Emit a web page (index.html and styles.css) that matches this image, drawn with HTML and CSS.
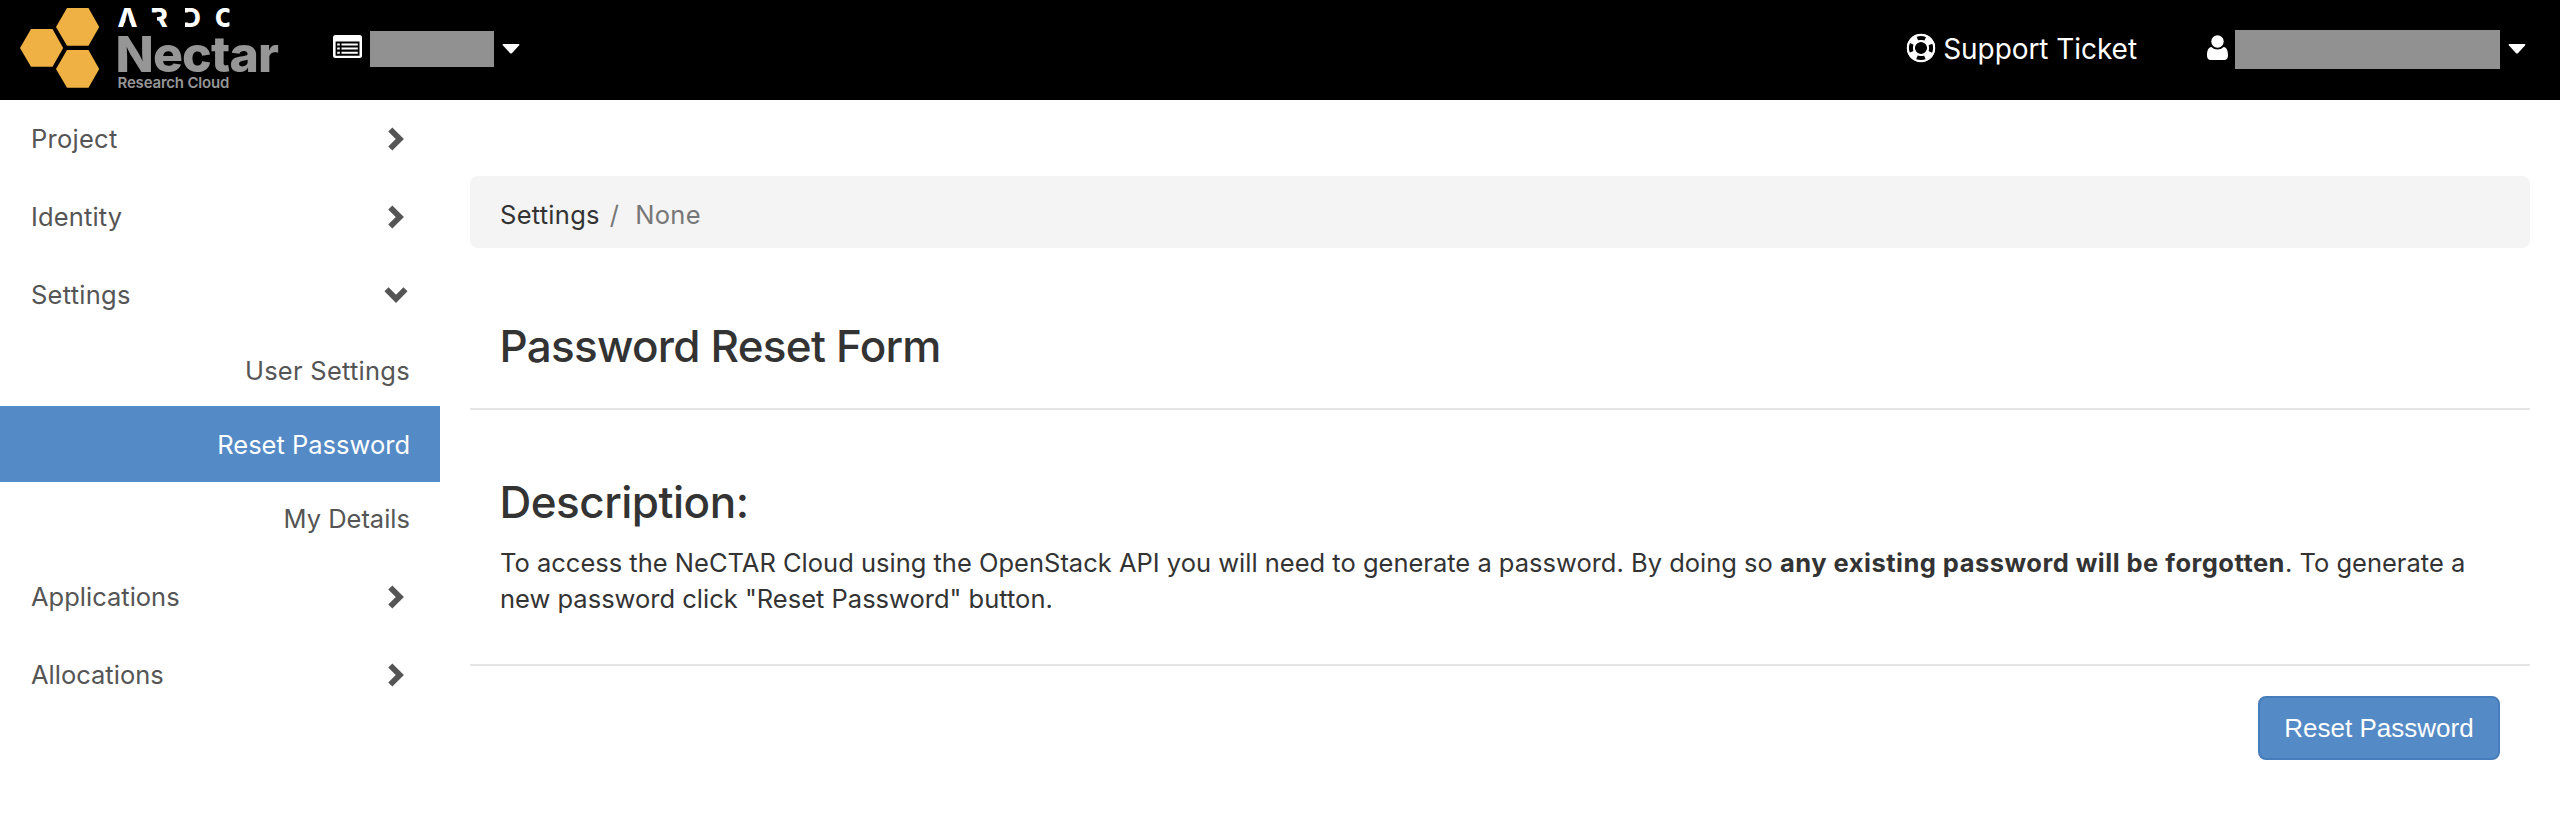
FILE: index.html
```html
<!DOCTYPE html>
<html lang="en">
<head>
<meta charset="utf-8">
<title>Password Reset Form</title>
<link rel="stylesheet" href="styles.css">
</head>
<body>
<svg class="defs" aria-hidden="true">
  <symbol id="chevron" viewBox="0 0 24 24"><path d="M6.300 2.500 15.800 12 6.300 21.500" fill="none" stroke="currentColor" stroke-width="5.800"/></symbol>
  <symbol id="caret" viewBox="0 0 18 10"><path d="M1.3 0H16.7Q18 .4 17 1.6L9.900 9.200Q9 10 8.100 9.200L1 1.600Q0 .4 1.300 0Z" fill="currentColor"/></symbol>
</svg>
<header class="navbar">
  <a class="brand" href="#">
    <svg class="logo" viewBox="0 0 300 100">
      <g class="hexes">
        <path d="M56 27 67 8H88.500L99.200 27 88.500 45.700H67Z"/>
        <path d="M20 48 31 29H52.500L63.200 48 52.500 66.800H31Z"/>
        <path d="M56 69 67 50H88.500L99.200 69 88.500 87.800H67Z"/>
      </g>
      <g class="ardc">
        <text x="117.500" y="27">A</text>
        <text x="150.500" y="27">R</text>
        <text x="182" y="27">D</text>
        <text x="215" y="27">C</text>
      </g>
      <g class="cuts">
        <path d="M127.500 14 131.700 27.500H123.300Z"/>
        <path d="M149 12.500H157V28H149Z"/>
        <path d="M181 12.500H190V22.500H181Z"/>
        <path d="M181 7H185V28H181Z"/>
        <path d="M229.500 6H236V29H229.500Z"/>
        <path d="M224 12.700H231V22.300H224Z"/>
      </g>
      <text class="nectar" x="115.600" y="72.300">Nectar</text>
      <text class="research" x="117.500" y="88">Research Cloud</text>
    </svg>
  </a>
  <a class="project-menu" href="#">
    <svg class="icon-list" viewBox="0 0 29 23">
      <path fill="currentColor" fill-rule="evenodd" d="M2.500 0H26.500Q29 0 29 2.500V20.500Q29 23 26.500 23H2.500Q0 23 0 20.500V2.500Q0 0 2.500 0ZM2.600 6.400V20.700H26.500V6.400Z"/>
      <path stroke="currentColor" stroke-width="2" d="M4.200 9.500h2.600M8.500 9.500H24.800M4.200 13.600h2.600M8.500 13.600H24.800M4.200 17.700h2.600M8.500 17.700H24.800"/>
    </svg>
    <span class="masked masked-project"></span>
    <svg class="caret"><use href="#caret"/></svg>
  </a>
  <a class="support" href="#">
    <svg class="icon-ring" viewBox="0 0 30 30">
      <circle cx="15" cy="15" r="10.200" fill="none" stroke="currentColor" stroke-width="8"/>
      <circle class="gaps" cx="15" cy="15" r="10.300"/>
      <circle cx="15" cy="15" r="13.100" fill="none" stroke="currentColor" stroke-width="2"/>
      <circle cx="15" cy="15" r="7" fill="none" stroke="currentColor" stroke-width="1.800"/>
    </svg>
    <span>Support Ticket</span>
  </a>
  <a class="user-menu" href="#">
    <svg class="icon-user" viewBox="0 0 21 25">
      <path fill="currentColor" d="M4.300 12Q7 14.600 10.500 14.600T16.700 12C20 12.500 21 16 21 20.500 21 23.500 19.500 25 17.300 25H3.700C1.500 25 0 23.500 0 20.500 0 16 1 12.500 4.300 12Z"/>
      <circle cx="10.500" cy="6.500" r="6.200" fill="currentColor"/>
    </svg>
    <span class="masked masked-user"></span>
    <svg class="caret"><use href="#caret"/></svg>
  </a>
</header>
<div class="layout">
  <nav class="sidebar">
    <a class="group" href="#"><span class="wide">Project</span><svg class="chev"><use href="#chevron"/></svg></a>
    <a class="group" href="#"><span class="mid">Identity</span><svg class="chev"><use href="#chevron"/></svg></a>
    <a class="group" href="#"><span class="wide">Settings</span><svg class="chev open"><use href="#chevron"/></svg></a>
    <div class="panels">
      <a class="panel wide" href="#">User Settings</a>
      <a class="panel active" href="#">Reset Password</a>
      <a class="panel" href="#">My Details</a>
    </div>
    <a class="group" href="#"><span>Applications</span><svg class="chev"><use href="#chevron"/></svg></a>
    <a class="group" href="#"><span>Allocations</span><svg class="chev"><use href="#chevron"/></svg></a>
  </nav>
  <main class="content">
    <div class="breadcrumb"><a href="#">Settings</a><span class="slash">/</span><span class="current">None</span></div>
    <h1 class="title">Password Reset Form</h1>
    <section class="body">
      <h2 class="subtitle">Description:</h2>
      <p class="text">To access the NeCTAR Cloud using the OpenStack API you will need to generate a password. By doing so <strong>any existing password will be forgotten</strong>. To generate a new password click "Reset Password" button.</p>
    </section>
    <footer class="actions"><button class="submit" type="button">Reset Password</button></footer>
  </main>
</div>
</body>
</html>
```
FILE: styles.css
```css
* { box-sizing: border-box; }
body {
  margin: 0;
  background: #fff;
  color: #333;
  font: 25.5px/36px Inter, "Liberation Sans", sans-serif;
}
a { color: inherit; text-decoration: none; }
svg { display: block; flex: none; }
.defs { width: 0; height: 0; position: absolute; }

.navbar {
  display: flex;
  height: 100px;
  background: #000;
  color: #fff;
}
.logo { width: 300px; height: 100px; }
.hexes { fill: #efb143; }
.ardc { fill: #fff; font: 800 26px Inter, sans-serif; }
.cuts { fill: #000; }
.nectar { fill: #969696; font: 800 50px Inter, sans-serif; letter-spacing: -0.9px; }
.research { fill: #969696; font: 600 15px Inter, sans-serif; letter-spacing: -0.19px; }
.project-menu, .support, .user-menu { display: flex; align-items: center; height: 97px; }
.project-menu { margin-left: 33px; }
.icon-list { width: 29px; height: 23px; margin-top: -4px; }
.masked { background: #919191; }
.masked-project { width: 124px; height: 36px; margin: 1px 8px 0; }
.masked-user { width: 265px; height: 39px; margin: 1px 8.5px 0 7px; }
.caret { width: 18px; height: 10px; }
.support { margin-left: auto; gap: 7px; font-size: 28px; letter-spacing: -0.06px; }
.icon-ring { width: 30px; height: 30px; margin-top: -2px; }
.gaps {
  fill: none;
  stroke: #000;
  stroke-width: 4.6;
  stroke-dasharray: 8.2 7.979;
  stroke-dashoffset: 4.1;
}
.user-menu { margin: 0 34px 0 69.5px; }
.icon-user { width: 21px; height: 25px; margin-top: -2px; }

.layout { display: flex; }
.sidebar { width: 440px; color: #555; }
.group {
  display: flex;
  align-items: center;
  justify-content: space-between;
  height: 78px;
  padding: 0 32px 0 31px;
}
.chev { width: 24px; height: 24px; margin-top: -1px; }
.open { transform: rotate(90deg); }
.wide { letter-spacing: 0.26px; }
.mid { letter-spacing: 0.15px; }
.panels { height: 224px; text-align: right; }
.panel { display: block; height: 72px; padding-right: 30px; line-height: 74px; }
.active { height: 76px; line-height: 78px; background: #548ac6; color: #fff; }

.content { flex: 1; padding: 76px 30px 0; }
.breadcrumb {
  display: flex;
  height: 72px;
  padding: 21px 30px 0;
  border-radius: 8px;
  background: #f4f4f4;
  letter-spacing: 0.27px;
}
.slash { margin: 0 16px 0 10px; color: #777; }
.current { color: #777; }
.title, .subtitle { margin: 0; font-size: 44px; font-weight: 500; line-height: 50px; }
.title {
  height: 162px;
  padding: 73px 30px 0 29.5px;
  border-bottom: 2px solid #e5e5e5;
  letter-spacing: -0.75px;
}
.body { height: 256px; padding: 67px 30px 0; border-bottom: 2px solid #e5e5e5; }
.subtitle { margin-left: -0.5px; letter-spacing: -0.5px; }
.text { margin: 18px 0 0; }
.text strong { font-weight: 700; letter-spacing: 0.48px; }
.actions { display: flex; justify-content: flex-end; padding: 30px 30px 0; }
.submit {
  width: 242px;
  height: 64px;
  padding: 0;
  border: 2px solid #477dbb;
  border-radius: 8px;
  background: #548ac6;
  color: #fff;
  font: 26px "Liberation Sans", sans-serif;
}
```
